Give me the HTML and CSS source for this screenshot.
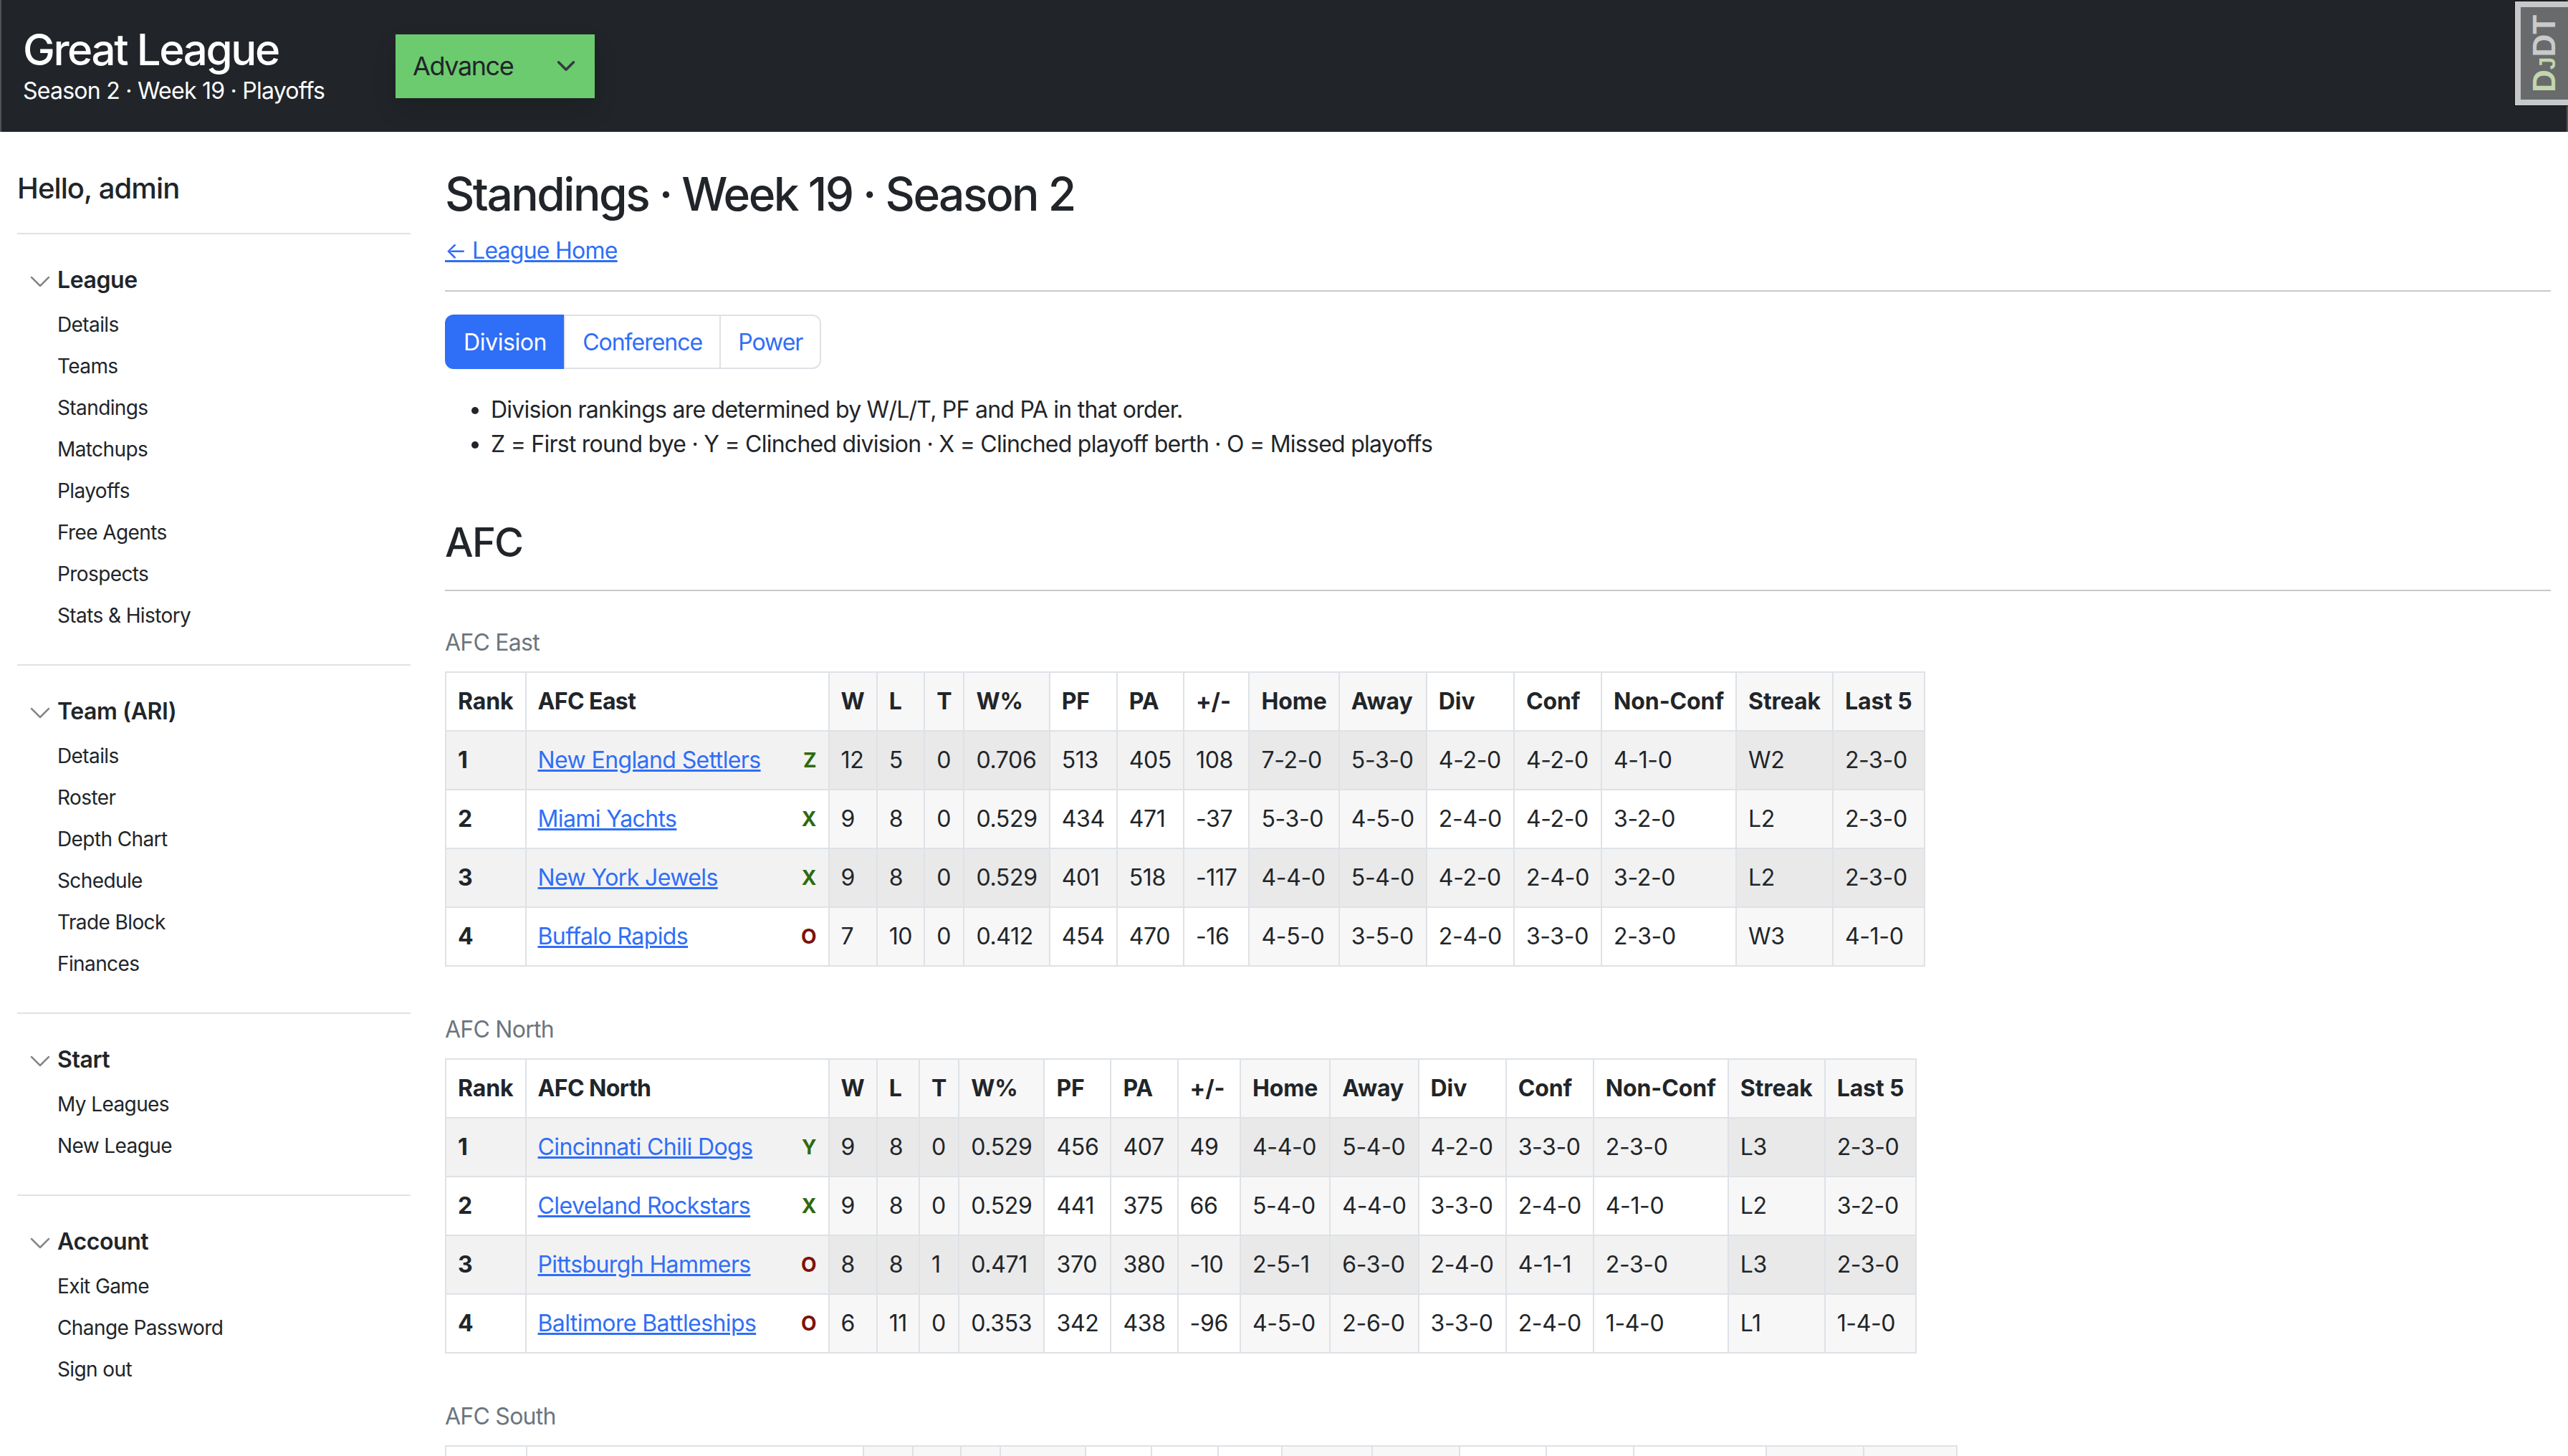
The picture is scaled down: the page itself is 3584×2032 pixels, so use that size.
FILE: index.html
```html
<!DOCTYPE html>
<html lang="en">
<head>
    <meta charset="UTF-8">
    <title>Standings · Week 19 · Season 2</title>
    <link rel="stylesheet" href="styles.css">
</head>
<body>

    <header class="topbar">
        <div class="brand">
            <div class="brand-title">Great League</div>
            <div class="brand-sub">Season 2 · Week 19 · Playoffs</div>
        </div>
        <div class="advance">
            <span>Advance</span>
            <svg class="advance-arrow" viewBox="0 0 16 16"><path d="m2 5 6 6 6-6" fill="none" stroke="#343a40" stroke-width="2" stroke-linecap="round" stroke-linejoin="round"/></svg>
        </div>
        <div class="djdt"><div class="djdt-text"><span class="djdt-d">D</span><span class="djdt-j">J</span>DT</div></div>
    </header>

    <div class="page">
        <aside class="sidebar">
            <div class="hello">Hello, admin</div>
            <hr class="side-rule">

            <div class="side-title">
                <svg class="chevron" viewBox="0 0 16 16"><path d="M1.646 4.646a.5.5 0 0 1 .708 0L8 10.293l5.646-5.647a.5.5 0 0 1 .708.708l-6 6a.5.5 0 0 1-.708 0l-6-6a.5.5 0 0 1 0-.708z"/></svg>
                League
            </div>
            <ul class="side-list">
                <li>Details</li>
                <li>Teams</li>
                <li>Standings</li>
                <li>Matchups</li>
                <li>Playoffs</li>
                <li>Free Agents</li>
                <li>Prospects</li>
                <li>Stats &amp; History</li>
            </ul>
            <hr class="side-rule">

            <div class="side-title">
                <svg class="chevron" viewBox="0 0 16 16"><path d="M1.646 4.646a.5.5 0 0 1 .708 0L8 10.293l5.646-5.647a.5.5 0 0 1 .708.708l-6 6a.5.5 0 0 1-.708 0l-6-6a.5.5 0 0 1 0-.708z"/></svg>
                Team (ARI)
            </div>
            <ul class="side-list">
                <li>Details</li>
                <li>Roster</li>
                <li>Depth Chart</li>
                <li>Schedule</li>
                <li>Trade Block</li>
                <li>Finances</li>
            </ul>
            <hr class="side-rule">

            <div class="side-title">
                <svg class="chevron" viewBox="0 0 16 16"><path d="M1.646 4.646a.5.5 0 0 1 .708 0L8 10.293l5.646-5.647a.5.5 0 0 1 .708.708l-6 6a.5.5 0 0 1-.708 0l-6-6a.5.5 0 0 1 0-.708z"/></svg>
                Start
            </div>
            <ul class="side-list">
                <li>My Leagues</li>
                <li>New League</li>
            </ul>
            <hr class="side-rule">

            <div class="side-title">
                <svg class="chevron" viewBox="0 0 16 16"><path d="M1.646 4.646a.5.5 0 0 1 .708 0L8 10.293l5.646-5.647a.5.5 0 0 1 .708.708l-6 6a.5.5 0 0 1-.708 0l-6-6a.5.5 0 0 1 0-.708z"/></svg>
                Account
            </div>
            <ul class="side-list">
                <li>Exit Game</li>
                <li>Change Password</li>
                <li>Sign out</li>
            </ul>
        </aside>

        <main class="content">
            <h1 class="page-title">Standings · Week 19 · Season 2</h1>
            <a class="home-link" href="#">← League Home</a>
            <hr class="rule rule-top">

            <div class="tabs">
                <a class="tab tab-active" href="#">Division</a>
                <a class="tab" href="#">Conference</a>
                <a class="tab" href="#">Power</a>
            </div>

            <ul class="notes">
                <li>Division rankings are determined by W/L/T, PF and PA in that order.</li>
                <li>Z = First round bye · Y = Clinched division · X = Clinched playoff berth · O = Missed playoffs</li>
            </ul>

            <h2 class="conf-title">AFC</h2>
            <hr class="rule rule-conf">

            <div class="div-label">AFC East</div>
            <table class="standings">
                <thead>
                    <tr><th>Rank</th><th class="team">AFC East</th><th>W</th><th>L</th><th>T</th><th>W%</th><th>PF</th><th>PA</th><th>+/-</th><th>Home</th><th>Away</th><th>Div</th><th>Conf</th><th>Non-Conf</th><th>Streak</th><th>Last 5</th></tr>
                </thead>
                <tbody>
                    <tr><th>1</th><td class="team"><a href="#">New England Settlers</a><span class="clinch clinch-in">Z</span></td><td>12</td><td>5</td><td>0</td><td>0.706</td><td>513</td><td>405</td><td>108</td><td>7-2-0</td><td>5-3-0</td><td>4-2-0</td><td>4-2-0</td><td>4-1-0</td><td>W2</td><td>2-3-0</td></tr>
                    <tr><th>2</th><td class="team"><a href="#">Miami Yachts</a><span class="clinch clinch-in">X</span></td><td>9</td><td>8</td><td>0</td><td>0.529</td><td>434</td><td>471</td><td>-37</td><td>5-3-0</td><td>4-5-0</td><td>2-4-0</td><td>4-2-0</td><td>3-2-0</td><td>L2</td><td>2-3-0</td></tr>
                    <tr><th>3</th><td class="team"><a href="#">New York Jewels</a><span class="clinch clinch-in">X</span></td><td>9</td><td>8</td><td>0</td><td>0.529</td><td>401</td><td>518</td><td>-117</td><td>4-4-0</td><td>5-4-0</td><td>4-2-0</td><td>2-4-0</td><td>3-2-0</td><td>L2</td><td>2-3-0</td></tr>
                    <tr><th>4</th><td class="team"><a href="#">Buffalo Rapids</a><span class="clinch clinch-out">O</span></td><td>7</td><td>10</td><td>0</td><td>0.412</td><td>454</td><td>470</td><td>-16</td><td>4-5-0</td><td>3-5-0</td><td>2-4-0</td><td>3-3-0</td><td>2-3-0</td><td>W3</td><td>4-1-0</td></tr>
                </tbody>
            </table>

            <div class="div-label">AFC North</div>
            <table class="standings">
                <thead>
                    <tr><th>Rank</th><th class="team">AFC North</th><th>W</th><th>L</th><th>T</th><th>W%</th><th>PF</th><th>PA</th><th>+/-</th><th>Home</th><th>Away</th><th>Div</th><th>Conf</th><th>Non-Conf</th><th>Streak</th><th>Last 5</th></tr>
                </thead>
                <tbody>
                    <tr><th>1</th><td class="team"><a href="#">Cincinnati Chili Dogs</a><span class="clinch clinch-in">Y</span></td><td>9</td><td>8</td><td>0</td><td>0.529</td><td>456</td><td>407</td><td>49</td><td>4-4-0</td><td>5-4-0</td><td>4-2-0</td><td>3-3-0</td><td>2-3-0</td><td>L3</td><td>2-3-0</td></tr>
                    <tr><th>2</th><td class="team"><a href="#">Cleveland Rockstars</a><span class="clinch clinch-in">X</span></td><td>9</td><td>8</td><td>0</td><td>0.529</td><td>441</td><td>375</td><td>66</td><td>5-4-0</td><td>4-4-0</td><td>3-3-0</td><td>2-4-0</td><td>4-1-0</td><td>L2</td><td>3-2-0</td></tr>
                    <tr><th>3</th><td class="team"><a href="#">Pittsburgh Hammers</a><span class="clinch clinch-out">O</span></td><td>8</td><td>8</td><td>1</td><td>0.471</td><td>370</td><td>380</td><td>-10</td><td>2-5-1</td><td>6-3-0</td><td>2-4-0</td><td>4-1-1</td><td>2-3-0</td><td>L3</td><td>2-3-0</td></tr>
                    <tr><th>4</th><td class="team"><a href="#">Baltimore Battleships</a><span class="clinch clinch-out">O</span></td><td>6</td><td>11</td><td>0</td><td>0.353</td><td>342</td><td>438</td><td>-96</td><td>4-5-0</td><td>2-6-0</td><td>3-3-0</td><td>2-4-0</td><td>1-4-0</td><td>L1</td><td>1-4-0</td></tr>
                </tbody>
            </table>

            <div class="div-label">AFC South</div>
            <table class="standings standings-south">
                <thead>
                    <tr><th>Rank</th><th class="team">AFC South</th><th>W</th><th>L</th><th>T</th><th>W%</th><th>PF</th><th>PA</th><th>+/-</th><th>Home</th><th>Away</th><th>Div</th><th>Conf</th><th>Non-Conf</th><th>Streak</th><th>Last 5</th></tr>
                </thead>
            </table>
        </main>
    </div>

</body>
</html>
```

FILE: styles.css
```css
* {
    box-sizing: border-box;
}
html, body {
    height: 100vh;
    overflow: hidden;
}
body {
    margin: 0;
    font-family: Inter, "Noto Sans", sans-serif;
    font-size: 32px;
    line-height: 48px;
    letter-spacing: -0.75px;
    color: #212529;
    background-color: #fff;
}

/* top bar */
.topbar {
    position: relative;
    display: flex;
    align-items: center;
    height: 184px;
    padding-left: 30px;
    background-color: #212529;
    border-left: 2px solid #4f5256;
    border-right: 2px solid #4f5256;
}
.brand {
    width: 520px;
    padding-top: 2px;
    color: #fff;
}
.brand-title {
    font-size: 60px;
    line-height: 68px;
    font-weight: 550;
    letter-spacing: -2.4px;
}
.brand-sub {
    font-size: 32px;
    line-height: 48px;
}
.advance {
    display: flex;
    align-items: center;
    justify-content: space-between;
    width: 278px;
    height: 89px;
    padding: 0 26px 0 24px;
    font-size: 36px;
    letter-spacing: -1.4px;
    color: #212529;
    background-color: #6ccb6f;
    box-shadow: 0 16px 32px rgba(0, 0, 0, 0.15);
}
.advance-arrow {
    width: 28px;
    height: 28px;
}
.djdt {
    position: absolute;
    top: 2px;
    right: -2px;
    display: flex;
    align-items: center;
    justify-content: center;
    width: 74px;
    height: 145px;
    border: 8px solid #c7c8c9;
    border-right-width: 0;
    outline: 1px solid #111;
    background-color: #696a6b;
    color: #c9cacb;
    font-family: "Liberation Sans", sans-serif;
    font-size: 44px;
    font-weight: bold;
    line-height: 1;
    letter-spacing: 0;
}
.djdt-text {
    transform: rotate(-90deg);
    white-space: nowrap;
}
.djdt-d, .djdt-j {
    color: #c3d6ad;
}
.djdt-j {
    font-size: 32px;
}

/* page columns */
.page {
    display: flex;
}
.sidebar {
    flex: 0 0 597px;
    padding: 55px 24px 0;
}
.content {
    flex: 1;
    min-width: 0;
    padding: 48px 24px 0;
}

/* sidebar */
.hello {
    font-size: 40px;
    line-height: 48px;
    font-weight: 550;
    letter-spacing: -0.9px;
}
.side-rule {
    height: 2px;
    margin: 38px 0 40px;
    border: 0;
    background-color: #dee2e6;
}
.side-title {
    display: flex;
    align-items: center;
    gap: 8px;
    margin-left: 16px;
    font-weight: 600;
    letter-spacing: -0.4px;
}
.chevron {
    flex: none;
    position: relative;
    top: 2px;
    width: 32px;
    height: 32px;
    fill: #7f7f7f;
    stroke: #7f7f7f;
    stroke-width: 0.3;
}
.side-list {
    list-style: none;
    margin: 9px 0 0;
    padding: 0 0 0 56px;
    font-size: 28px;
    letter-spacing: -0.6px;
}
.side-list li {
    padding: 8px 0;
    line-height: 42px;
}
.side-list + .side-rule {
    margin-top: 39px;
}

/* main */
.page-title {
    margin: 0 0 17px;
    font-size: 64px;
    line-height: 77px;
    font-weight: 550;
    letter-spacing: -2.5px;
}
a {
    color: #2f6ef7;
}
.home-link {
    display: block;
    line-height: 48px;
}
.rule {
    height: 2px;
    border: 0;
    background-color: #c8c9ca;
}
.rule-top {
    margin: 31px 0 32px;
}
.rule-conf {
    margin: 37px 0 48px;
}
.tabs {
    display: flex;
    width: fit-content;
    margin-bottom: 33px;
}
.tab {
    padding: 13px 24px 11px;
    height: 76px;
    line-height: 48px;
    letter-spacing: -1px;
    text-decoration: none;
    border: 2px solid #dee2e6;
    margin-left: -2px;
}
.tab:first-child {
    margin-left: 0;
    border-radius: 12px 0 0 12px;
}
.tab:last-child {
    border-radius: 0 12px 12px 0;
}
.tab-active {
    letter-spacing: -0.4px;
    color: #fff;
    background-color: #2f6ef7;
    border-color: #2f6ef7;
}
.notes {
    margin: 0 0 84px;
    padding-left: 64px;
}
.conf-title {
    margin: 0;
    font-size: 56px;
    line-height: 58px;
    font-weight: 550;
    letter-spacing: -1.8px;
}
.div-label {
    margin-bottom: 16px;
    color: #6c757d;
}

/* tables */
.standings {
    border-collapse: collapse;
    margin-bottom: 64px;
}
.standings th, .standings td {
    padding: 16px;
    border: 2px solid #dee2e6;
    text-align: left;
    white-space: nowrap;
    line-height: 48px;
    letter-spacing: -0.35px;
}
.standings th {
    font-weight: 650;
    letter-spacing: -0.1px;
}
.standings .team {
    width: 423px;
    letter-spacing: -0.6px;
}
.standings tbody tr:nth-child(odd) {
    background-color: #f2f2f2;
}
.standings tr > :nth-child(n+3):nth-child(-n+6),
.standings tr > :nth-child(10),
.standings tr > :nth-child(11),
.standings tr > :nth-child(15),
.standings tr > :nth-child(16) {
    background-color: #f7f7f7;
}
.standings tbody tr:nth-child(odd) > :nth-child(n+3):nth-child(-n+6),
.standings tbody tr:nth-child(odd) > :nth-child(10),
.standings tbody tr:nth-child(odd) > :nth-child(11),
.standings tbody tr:nth-child(odd) > :nth-child(15),
.standings tbody tr:nth-child(odd) > :nth-child(16) {
    background-color: #e9e9e9;
}
.clinch {
    float: right;
    font-size: 28px;
    font-weight: 700;
    letter-spacing: 0;
}
.clinch-in {
    color: #2f6a10;
}
.clinch-out {
    color: #7d1208;
}
.standings-south {
    table-layout: fixed;
    width: 2109px;
}
.standings-south th:nth-child(1) { width: 113px; }
.standings-south th:nth-child(2) { width: 470px; }
.standings-south th:nth-child(3) { width: 69px; }
.standings-south th:nth-child(4) { width: 67px; }
.standings-south th:nth-child(5) { width: 55px; }
.standings-south th:nth-child(6) { width: 119px; }
.standings-south th:nth-child(7) { width: 92px; }
.standings-south th:nth-child(8) { width: 93px; }
.standings-south th:nth-child(9) { width: 89px; }
.standings-south th:nth-child(10) { width: 126px; }
.standings-south th:nth-child(11) { width: 122px; }
.standings-south th:nth-child(12) { width: 121px; }
.standings-south th:nth-child(13) { width: 122px; }
.standings-south th:nth-child(14) { width: 185px; }
.standings-south th:nth-child(15) { width: 136px; }
.standings-south th:nth-child(16) { width: 130px; }
```
